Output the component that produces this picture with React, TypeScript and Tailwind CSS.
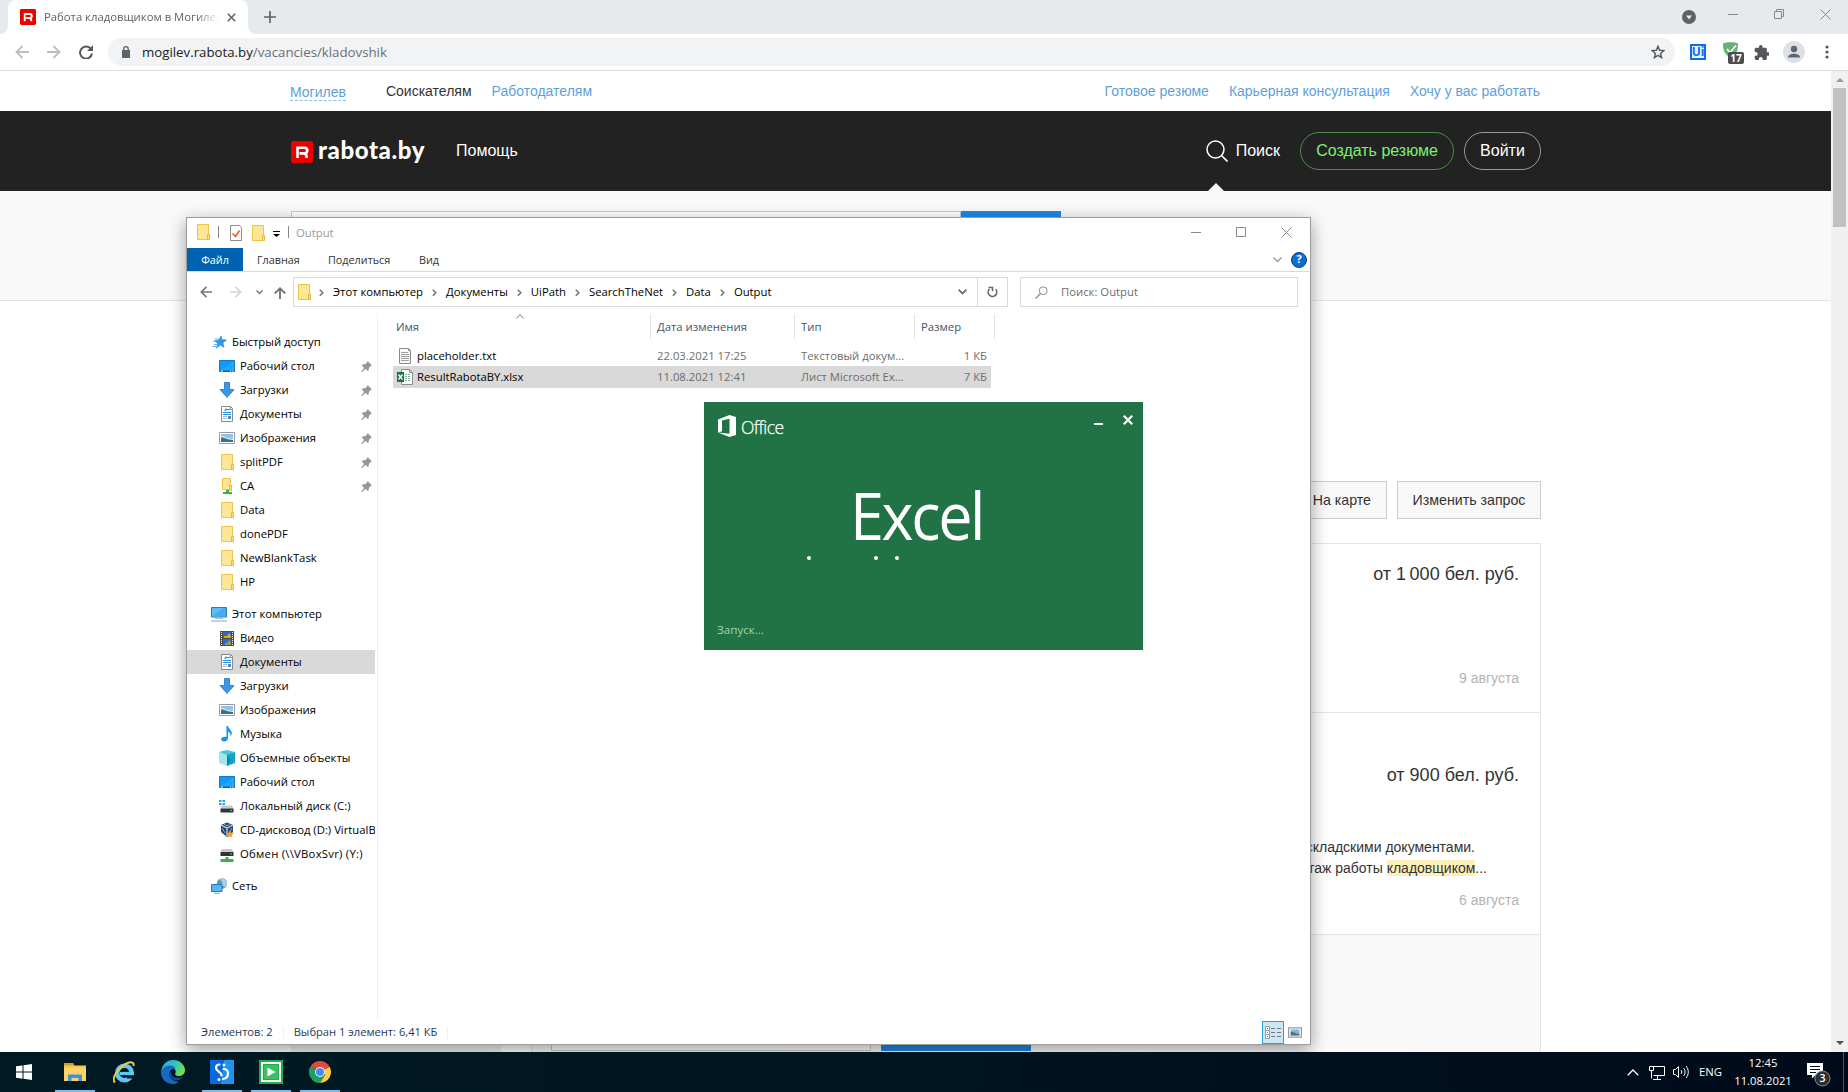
import React from "react";

const UI = "font-['Open_Sans','Noto_Sans',sans-serif]";
const ARIAL = "font-['Liberation_Sans',Arial,sans-serif]";

function Svg({ w = 16, h = 16, vb, className = "", children }: { w?: number; h?: number; vb?: string; className?: string; children: React.ReactNode }) {
  return (
    <svg width={w} height={h} viewBox={vb ?? `0 0 ${w} ${h}`} className={`block shrink-0 ${className}`} fill="none">
      {children}
    </svg>
  );
}

/* ---------- small icons ---------- */

const Folder = () => (
  <Svg>
    <path d="M2.500.500h11v15h-11z" fill="#ffe694" stroke="#ecc447" />
    <path d="M12.500 10.500h2v5h-2z" fill="#fbe08a" stroke="#e6b93a" />
  </Svg>
);
const NetFolder = () => (
  <Svg>
    <path d="M3.500.500h8v11h-8z" fill="#ffe694" stroke="#ecc447" />
    <path d="M10.500 7.500h2v5h-2z" fill="#fbe08a" stroke="#e6b93a" />
    <path d="M7 12h3v2h-3zM4 14h9v2h-9z" fill="#37b24a" />
  </Svg>
);
const QuickStar = () => (
  <Svg>
    <path d="m10 2 1 3.700 4.500.2-3.600 2.800 1.100 4.600-3.700-2.200L5.500 14l1.300-4.600L3.600 6.700l4.300-.4z" fill="#2f9be8" stroke="#1d7fc9" strokeWidth=".6" />
    <path d="M4 5h4M2.500 7.500h3M3 10.500h3M1.500 12.500h4" stroke="#55b2f0" />
  </Svg>
);
const Desktop = () => (
  <Svg>
    <path d="M.5 2.500h15v11H.5z" fill="#0d9bff" stroke="#1279c2" />
    <path d="M1 13 15 3v10z" fill="#1fa8ff" />
    <path d="M1 13h14" stroke="#0a5c9e" />
    <path d="M2 13h2M11 13h1M13 13h1" stroke="#fff" />
  </Svg>
);
const Download = () => (
  <Svg>
    <path d="M5.500.500h5v7h4.500L8 15.500 1 7.500h4.500z" fill="#3a96e6" stroke="#2274bf" strokeWidth=".8" />
  </Svg>
);
const Doc = () => (
  <Svg>
    <path d="M2.500.500h9l2 2v13h-11z" fill="#fff" stroke="#8a8a8a" />
    <path d="M11.500.500v3h2" stroke="#8a8a8a" />
    <path d="M5.500 5 7 2.500V5M8 3.500h3M4 6.500h8M4 8.500h8" stroke="#2a8dd8" />
    <path d="M4 10.500h4M4 12.500h4" stroke="#9bb8cf" />
    <path d="M9 10h3v3H9z" fill="#4a8bb5" />
  </Svg>
);
const Picture = () => (
  <Svg>
    <path d="M.5 2.500h15v11H.5z" fill="#fff" stroke="#9a9a9a" />
    <path d="M2 4h12v8H2z" fill="#8cc4ee" />
    <path d="M2 6c4 0 5 2.500 12 2.500V10H2z" fill="#cfe6f2" />
    <path d="M2 7.500c4 0 5 2 12 2.500v2H2z" fill="#3f6f7a" />
  </Svg>
);
const Computer = () => (
  <Svg>
    <path d="M.5 1.500h15v9.500H.5z" fill="#5ebdf8" stroke="#3579ab" />
    <path d="M1 10.500 13 2h2v8.500z" fill="#3fadf5" />
    <path d="M4 12.500h8" stroke="#a9b8c4" />
    <path d="M0 15h16" stroke="#93a5b3" />
  </Svg>
);
const Video = () => (
  <Svg>
    <path d="M1 1h14v15H1z" fill="#4c4c4c" />
    <path d="M4 2h8v6H4zM4 9h8v6H4z" fill="#3467c4" />
    <path d="M5 6h3l2-3 2 3v2H5z" fill="#d6a928" />
    <path d="M6 13h2l2-3 2 2v3H6z" fill="#8ba33a" />
    <path d="M2.500 2v14M13.500 2v14" stroke="#eee" strokeDasharray="1 1" />
  </Svg>
);
const Music = () => (
  <Svg>
    <path d="M7.500 0h1.500c.5 3 4 4 3.800 7.500-.1 1.300-.8 2.500-1.500 3 .8-2.500-.3-4-2.300-4.700V12c0 2.300-1.800 3.500-4 3.500-1.700 0-2.800-.9-2.800-2.200 0-1.600 1.700-2.600 3.500-2.600.7 0 1.300.1 1.800.4z" fill="#0d97f2" />
  </Svg>
);
const Cube = () => (
  <Svg>
    <path d="M0 2 8 4v12l-8-3z" fill="#a5e6ea" />
    <path d="M16 2 8 4v12l8-3z" fill="#14a6c9" />
    <path d="M0 2 8 0l8 2-8 3z" fill="#48c6d6" />
    <path d="m8 5 4 5-4 6z" fill="#0f87ab" />
  </Svg>
);
const DriveBody = ({ y }: { y: number }) => (
  <g transform={`translate(0 ${y})`}>
    <path d="M3 0h10l1.500 3h-13z" fill="#c9c9c9" />
    <path d="M1.500 3h13v4h-13z" fill="#333" />
    <path d="M11 4.500h2v1h-2z" fill="#3be04c" />
  </g>
);
const DiskC = () => (
  <Svg>
    <path d="M0 2h2.500v2H0zM3.500 2H6v2H3.500zM0 5h2.500v2H0zM3.500 5H6v2H3.500z" fill="#17a9ee" />
    <DriveBody y={7.500} />
  </Svg>
);
const DiskCD = () => (
  <Svg>
    <path d="M8 .5 14 3v7l-6 5-6-5V3z" fill="#25486e" />
    <path d="M2 3 8 6l6-3M8 6v8" stroke="#c5d3e2" strokeWidth="1.300" />
    <path d="m3 6 3 5M13 6l-3 5M5 2l3 2 3-2" stroke="#8fa9c4" />
    <path d="m11 8.500 1.200 2.300 2.600.3-1.900 1.800.5 2.600L11 14.300 8.700 15.500l.4-2.600-1.900-1.800 2.600-.3z" fill="#f4a21f" />
  </Svg>
);
const DiskNet = () => (
  <Svg>
    <DriveBody y={3} />
    <path d="M6.500 11h3v2h5v3h-13v-3h5z" fill="#3fae49" />
  </Svg>
);
const Network = () => (
  <Svg>
    <circle cx="11" cy="5.500" r="5.200" fill="#5c9dbd" />
    <path d="M8 2c3 0 4 2 3 4s3 2 3 4c2-2 3-5 1-7-2-3-6-2-7-1z" fill="#a9d2e0" />
    <path d="M.5 6.500h10.500v7H.5z" fill="#51b7f6" stroke="#2c78ab" />
    <path d="M3 15.300h6" stroke="#8ba0af" />
  </Svg>
);
const Pin = () => (
  <Svg w={11} h={11} className="absolute left-[174px] top-[7px]">
    <path d="M6.500 0 11 4.500l-1.200.4-2 2 .2 2-1.200 1.100L4.500 7.700 1 11 0 10.700 3 7 .9 4.500 2 3.200l2.200.1 2-2z" fill="#8d98a2" />
  </Svg>
);
const Chevron = ({ first }: { first?: boolean }) => (
  <Svg w={5} h={8} className={first ? "ml-[7px] mr-[9px] mt-px" : "mx-[9px] mt-px"}>
    <path d="m.8.8 3 3-3 3" stroke="#777" strokeWidth="1.600" />
  </Svg>
);
const TxtFile = () => (
  <Svg>
    <path d="M2.500.500h9l2 2v13h-11z" fill="#fafafa" stroke="#8c8c8c" />
    <path d="M11.500.500v2h2" stroke="#8c8c8c" />
    <path d="M4 4.500h7M4 6.500h8M4 8.500h8M4 10.500h8M4 12.500h8" stroke="#a0a0a0" />
  </Svg>
);
const XlsFile = () => (
  <Svg>
    <path d="M4.500.500h8l3 3v12h-11z" fill="#fff" stroke="#8c8c8c" />
    <path d="M12.500.500v3h3" stroke="#8c8c8c" />
    <path d="M8 5.500h6M8 7.500h6M8 9.500h6M8 11.500h6" stroke="#6fb38c" strokeDasharray="2 1" />
    <path d="M0 3h7v10H0z" fill="#1d7144" />
    <path d="m1.500 5.500 4 5M5.500 5.500l-4 5" stroke="#fff" strokeWidth="1.400" />
  </Svg>
);

/* ---------- browser ---------- */

function RLogo({ size }: { size: number }) {
  return (
    <Svg w={size} h={size} vb="0 0 22 22">
      <rect width="22" height="22" rx="2" fill="#ee0000" />
      <path d="M6.500 17V6.800h7a2.800 2.800 0 0 1 0 5.600H8.500M12.500 12.400c2.500.3 3 1.300 3 2.600v2" stroke="#fff" strokeWidth="2.600" />
    </Svg>
  );
}

function TabStrip() {
  return (
    <div className={`flex h-[34px] bg-[#e6eaed] ${UI}`}>
      <div className="flex w-2 bg-white"><div className="w-2 rounded-br-lg bg-[#e6eaed]" /></div>
      <div className="flex w-[240px] items-center rounded-t-lg bg-white pl-3">
        <RLogo size={16} />
        <div className="ml-2 w-[178px] overflow-hidden whitespace-nowrap text-[11.300px] text-[#5f6368] [mask-image:linear-gradient(to_right,black_86%,transparent_98%)]">
          Работа кладовщиком в Могилеве
        </div>
        <Svg w={9} h={9} className="ml-[5px]"><path d="m.8.8 7.400 7.400M8.200.8.8 8.200" stroke="#5f6368" strokeWidth="1.600" /></Svg>
      </div>
      <div className="w-2 bg-white"><div className="h-full rounded-bl-lg bg-[#e6eaed]" /></div>
      <Svg w={12} h={12} className="ml-2 mt-[11px]"><path d="M6 0v12M0 6h12" stroke="#5f6368" strokeWidth="1.700" /></Svg>
      <div className="ml-auto flex pr-[17px]">
        <Svg w={14} h={14} className="mt-[10px]"><circle cx="7" cy="7" r="7" fill="#5f6368" /><path d="M4 5.500h6l-3 4z" fill="#e6eaed" /></Svg>
        <Svg w={10} h={10} className="ml-8 mt-[9px]"><path d="M0 5.500h10" stroke="#888" /></Svg>
        <Svg w={10} h={10} className="ml-9 mt-[9px]"><path d="M.5 2.500h7v7h-7zM2.500 2V.5h7v7H8" stroke="#888" /></Svg>
        <Svg w={11} h={11} className="ml-9 mt-[9px]"><path d="m.5.5 10 10M10.500.500l-10 10" stroke="#888" /></Svg>
      </div>
    </div>
  );
}

function Toolbar() {
  return (
    <div className={`flex h-[37px] items-center border-b border-[#dadcde] bg-white pl-[15px] ${UI}`}>
      <Svg w={14} h={14}><path d="M14 7H1.500M7.500 1l-6 6 6 6" stroke="#bcbec1" strokeWidth="1.800" /></Svg>
      <Svg w={14} h={14} className="ml-[18px]"><path d="M0 7h12.500M6.500 1l6 6-6 6" stroke="#bcbec1" strokeWidth="1.800" /></Svg>
      <Svg w={14} h={14} className="ml-[18px]"><path d="M12 4.200A6 6 0 1 0 13 8.500" stroke="#54585d" strokeWidth="2" /><path d="M14 0v6H8z" fill="#54585d" /></Svg>
      <div className="ml-[15px] flex h-7 w-[1567px] items-center rounded-full bg-[#f1f3f4] pl-[14px] pr-[10px] text-[13.250px] text-[#6b6f74]">
        <Svg w={8} h={12} className="-mt-px"><path d="M0 4h8v8H0z" fill="#5f6368" /><path d="M1.800 5V2.900a2.200 2.200 0 0 1 4.400 0V5" stroke="#5f6368" strokeWidth="1.300" /></Svg>
        <div className="ml-3 mt-px"><span className="text-[#202124]">mogilev.rabota.by</span>/vacancies/kladovshik</div>
        <Svg w={14} h={14} className="ml-auto"><path d="m7 1.300 1.600 4 4.300.3-3.300 2.800 1 4.200L7 10.300l-3.600 2.300 1-4.200L1.100 5.600l4.300-.3z" stroke="#54585d" strokeWidth="1.400" /></Svg>
      </div>
      <div className="ml-[15px] flex h-4 w-4 items-center justify-center border-2 border-[#0a6fe8] bg-[#e9f3ff] text-[12px] font-bold leading-none text-[#0a6fe8]">Ui</div>
      <Svg w={22} h={22} className="ml-[17px] mt-[2px]">
        <path d="M0 1.500C3-.2 12-.2 15 1.500c0 6-1 11-7.500 14C1 12.500 0 7.500 0 1.500z" fill="#67b279" />
        <path d="m4 7 3 3.500 6-7" stroke="#fff" strokeWidth="1.500" />
        <rect x="5" y="10" width="16" height="12" rx="2" fill="#4d4d4d" />
        <text x="13" y="19.500" textAnchor="middle" fontSize="10" fontWeight="700" fill="#fff" className="font-['Open_Sans']">17</text>
      </Svg>
      <Svg w={15} h={15} vb="1 1 21 21" className="ml-[9px]"><path d="M20.500 11H19V7a2 2 0 0 0-2-2h-4V3.500a2.500 2.500 0 0 0-5 0V5H4a2 2 0 0 0-2 2v3.800h1.500a2.700 2.700 0 0 1 0 5.400H2V20a2 2 0 0 0 2 2h3.800v-1.500a2.700 2.700 0 0 1 5.400 0V22H17a2 2 0 0 0 2-2v-4h1.500a2.500 2.500 0 0 0 0-5z" fill="#54585d" /></Svg>
      <Svg w={22} h={22} className="ml-[14px]"><circle cx="11" cy="11" r="11" fill="#dde1e6" /><circle cx="11" cy="8" r="3.200" fill="#5c6672" /><path d="M5 16.500c0-5 12-5 12 0z" fill="#5c6672" /></Svg>
      <Svg w={4} h={14} className="ml-[20px]"><circle cx="2" cy="2" r="1.600" fill="#54585d" /><circle cx="2" cy="7" r="1.600" fill="#54585d" /><circle cx="2" cy="12" r="1.600" fill="#54585d" /></Svg>
    </div>
  );
}

function Site() {
  return (
    <div className={`flex w-[1831px] flex-col overflow-hidden bg-white ${ARIAL}`}>
      <div className="flex h-10 shrink-0 items-center pl-[290px] pr-[291px] pt-px text-[14px] text-[#5d9fdc]">
        <span className="mt-px border-b border-dashed border-[#8fbde8] leading-[16px]">Могилев</span>
        <span className="ml-10 text-[#333]">Соискателям</span>
        <span className="ml-5">Работодателям</span>
        <span className="ml-auto">Готовое резюме</span>
        <span className="ml-5">Карьерная консультация</span>
        <span className="ml-5">Хочу у вас работать</span>
      </div>
      <div className="relative flex h-20 shrink-0 items-center bg-[#222] pl-[291px] pr-[290px] text-[16px] text-white">
        <div className="mt-[2px]"><RLogo size={22} /></div>
        <span className="-mt-[2px] ml-[5px] w-[108px] font-['Lato'] text-[24px] font-black leading-none tracking-[0.600px]">rabota.by</span>
        <span className="ml-[30px]">Помощь</span>
        <Svg w={22} h={22} className="ml-auto"><circle cx="9.500" cy="9.500" r="8.500" stroke="#fff" strokeWidth="1.500" /><path d="m15.500 15.500 6 6" stroke="#fff" strokeWidth="1.700" /></Svg>
        <span className="ml-2">Поиск</span>
        <span className="ml-5 flex h-[38px] w-[154px] items-center justify-center rounded-full border border-[#4b8d46] text-[#7df073]">Создать резюме</span>
        <span className="ml-[10px] flex h-[38px] w-[77px] items-center justify-center rounded-full border border-[#999]">Войти</span>
        <Svg w={16} h={8} className="absolute bottom-0 left-[1208px]"><path d="m8 0 8 8H0z" fill="#f9f9f9" /></Svg>
      </div>
      <div className="flex h-[110px] shrink-0 border-b border-[#e4e4e4] bg-[#f9f9f9] pl-[291px] pt-5">
        <div className="h-[38px] w-[670px] border border-[#ccc] bg-white" />
        <div className="h-[38px] w-[100px] bg-[#1e88e5]" />
      </div>
      <div className="flex w-[1541px] grow pl-[291px]">
        <div className="mr-[30px] mt-[634px] w-[210px] shrink-0 bg-[#f0f0f0]" />
        <div className="flex w-[1010px] flex-col pt-[180px] text-[14px] text-[#333]">
          <div className="flex h-[38px] shrink-0 justify-end gap-[10px]">
            <div className="flex w-[115px] items-center justify-end border border-[#ccc] bg-[#f9f9f9] pr-[15px] pt-px text-[14.200px]">На карте</div>
            <div className="flex w-[144px] items-center justify-center border border-[#ccc] bg-[#f9f9f9] pt-px text-[14.200px]">Изменить запрос</div>
          </div>
          <div className="mt-6 h-[170px] shrink-0 border border-[#e4e4e4] pr-[21px] pt-[19px] text-right">
            <div className="text-[18px] leading-[22px]">от 1<span className="tracking-[-1.500px]">&nbsp;</span>000 бел. руб.</div>
            <div className="mt-[83px] leading-[20px] text-[#b3b3b3]">9 августа</div>
          </div>
          <div className="-mt-px h-[223px] shrink-0 border border-[#e4e4e4] pt-[51px] text-right">
            <div className="pr-[21px] text-[18px] leading-[22px]">от 900 бел. руб.</div>
            <div className="mt-[51px] pr-[65px] leading-[21px]">Работа со складскими документами.</div>
            <div className="pr-[53px] leading-[21px]">Стаж работы <span className="bg-[#fcefb8]">кладовщиком</span>...</div>
            <div className="mt-[11px] pr-[21px] leading-[20px] text-[#b3b3b3]">6 августа</div>
          </div>
          <div className="flex grow gap-[10px] border-x border-[#e4e4e4] bg-[#f9f9f9] pl-[19px] pt-[78px]">
            <div className="h-[38px] w-[320px] border border-[#ccc] bg-white" />
            <div className="h-[38px] w-[150px] bg-[#1e88e5]" />
          </div>
        </div>
      </div>
    </div>
  );
}

function Scrollbar() {
  return (
    <div className="flex w-[17px] flex-col items-center bg-[#f0f0f0]">
      <Svg w={8} h={4} className="mt-[7px]"><path d="m4 0 4 4H0z" fill="#999" /></Svg>
      <div className="mt-[6px] h-[139px] w-[13px] bg-[#c1c1c1]" />
      <Svg w={8} h={4} className="mb-[7px] mt-auto"><path d="m4 4 4-4H0z" fill="#505050" /></Svg>
    </div>
  );
}

/* ---------- file explorer ---------- */

type Item = { icon: React.ComponentType; label: string; pinned?: boolean; active?: boolean; wide?: boolean };

const quick: Item[] = [
  { icon: Desktop, label: "Рабочий стол", pinned: true },
  { icon: Download, label: "Загрузки", pinned: true },
  { icon: Doc, label: "Документы", pinned: true },
  { icon: Picture, label: "Изображения", pinned: true },
  { icon: Folder, label: "splitPDF", pinned: true },
  { icon: NetFolder, label: "CA", pinned: true },
  { icon: Folder, label: "Data" },
  { icon: Folder, label: "donePDF" },
  { icon: Folder, label: "NewBlankTask" },
  { icon: Folder, label: "HP" },
];
const pc: Item[] = [
  { icon: Video, label: "Видео" },
  { icon: Doc, label: "Документы", active: true },
  { icon: Download, label: "Загрузки" },
  { icon: Picture, label: "Изображения" },
  { icon: Music, label: "Музыка" },
  { icon: Cube, label: "Объемные объекты" },
  { icon: Desktop, label: "Рабочий стол" },
  { icon: DiskC, label: "Локальный диск (C:)" },
  { icon: DiskCD, label: "CD-дисковод (D:) VirtualB" },
  { icon: DiskNet, label: "Обмен (\\\\VBoxSvr) (Y:)", wide: true },
];

function TreeRow({ item, root }: { item: Item; root?: boolean }) {
  const Icon = item.icon;
  return (
    <div className={`relative flex h-6 w-[188px] items-center overflow-hidden whitespace-nowrap ${root ? "gap-[5px] pl-6" : "gap-[5px] pl-8"} ${item.active ? "bg-[#d9d9d9]" : ""}`}>
      <Icon />
      <span className={item.wide ? "tracking-[0.250px]" : ""}>{item.label}</span>
      {item.pinned && <Pin />}
    </div>
  );
}

function Explorer() {
  return (
    <div className={`absolute left-[186px] top-[217px] flex h-[828px] w-[1125px] flex-col border border-[#9d9d9d] bg-white text-[11.300px] text-black shadow-[0_5px_16px_rgba(0,0,0,0.38)] ${UI}`}>
      <div className="flex h-[30px] shrink-0 items-start pl-[8px] pt-[6px]">
        <Folder />
        <div className="ml-[7px] mt-[2px] h-3 w-px bg-[#888]" />
        <Svg className="ml-[9px] mt-px"><path d="M2.500.500h9l2 2v13h-11z" fill="#fff" stroke="#8c8c8c" /><path d="m4.500 8.500 3 3 4-6" stroke="#e8602c" strokeWidth="1.600" /></Svg>
        <div className="ml-[6px] mt-px"><Folder /></div>
        <Svg w={7} h={6} className="ml-[7px] mt-[7px]"><path d="M0 .5h7" stroke="#000" /><path d="M0 3h7L3.500 6z" fill="#000" /></Svg>
        <div className="ml-[8px] mt-[2px] h-3 w-px bg-[#888]" />
        <span className="ml-[7px] leading-[17px] text-[#999]">Output</span>
        <Svg w={10} h={10} className="ml-auto mt-[3px]"><path d="M0 5.500h10" stroke="#888" /></Svg>
        <Svg w={10} h={10} className="ml-[35px] mt-[3px]"><path d="M.5.500h9v9h-9z" stroke="#888" /></Svg>
        <Svg w={11} h={11} className="ml-[35px] mr-[18px] mt-[3px]"><path d="m.5.500 10 10M10.500.500l-10 10" stroke="#888" /></Svg>
      </div>
      <div className="flex h-6 shrink-0 items-center border-b border-[#dadbdc] text-[10.800px] text-[#333]">
        <div className="flex h-full w-14 items-center justify-center bg-[#0063b1] pt-[2px] text-white">Файл</div>
        <span className="ml-[14px] mt-[2px] w-[71px]">Главная</span>
        <span className="mt-[2px] w-[91px]">Поделиться</span>
        <span className="mt-[2px]">Вид</span>
        <Svg w={9} h={6} className="ml-auto"><path d="m.5.500 4 4 4-4" stroke="#999" strokeWidth="1.300" /></Svg>
        <div className="ml-[9px] mr-[3px] flex h-4 w-4 items-center justify-center rounded-full border border-[#0a3f78] bg-[#0b6fd0] text-[11px] font-bold text-white">?</div>
      </div>
      <div className="mt-[5px] flex h-[30px] shrink-0 items-center pl-[13px] pr-[12px]">
        <Svg w={12} h={12}><path d="M12 6H1.500M6.500.8 1.300 6l5.200 5.200" stroke="#777" strokeWidth="1.700" /></Svg>
        <Svg w={12} h={12} className="ml-[18px]"><path d="M0 6h10.500M5.500.8 10.700 6l-5.200 5.200" stroke="#d5d5d5" strokeWidth="1.700" /></Svg>
        <Svg w={7} h={5} className="ml-[14px]"><path d="m.5.500 3 3 3-3" stroke="#777" strokeWidth="1.500" /></Svg>
        <Svg w={12} h={12} className="ml-[11px] mt-[2px]"><path d="M6 12V1.500M.8 6.500 6 1.300l5.200 5.200" stroke="#777" strokeWidth="1.900" /></Svg>
        <div className="ml-[7px] flex h-[30px] w-[715px] items-center border border-[#d9d9d9] pl-[2px]">
          <Folder />
          <Chevron first />
          <span>Этот компьютер</span><Chevron /><span>Документы</span><Chevron /><span>UiPath</span><Chevron />
          <span>SearchTheNet</span><Chevron /><span>Data</span><Chevron /><span>Output</span>
          <Svg w={9} h={6} className="ml-auto mr-[10px]"><path d="m.7.700 3.800 3.800L8.300.7" stroke="#666" strokeWidth="1.700" /></Svg>
          <div className="flex h-full w-[30px] items-center justify-center border-l border-[#d9d9d9]">
            <Svg w={11} h={12}><path d="M2.500 3a4.300 4.300 0 1 0 6.200.3" stroke="#666" strokeWidth="1.600" /><path d="M1.500 1.500h4v3.800" stroke="#666" strokeWidth="1.500" /></Svg>
          </div>
        </div>
        <div className="ml-auto flex h-[30px] w-[278px] items-center border border-[#d9d9d9] pl-[14px] text-[#6d6d6d]">
          <Svg w={13} h={13}><circle cx="8.200" cy="4.700" r="3.900" stroke="#8d8494" /><path d="M5.500 7.500.5 12.500" stroke="#8d8494" strokeWidth="1.200" /></Svg>
          <span className="ml-[13px]">Поиск: Output</span>
        </div>
      </div>
      <div className="mt-[7px] flex grow">
        <div className="w-[191px] shrink-0 border-r border-[#f2f2f2] pt-4">
          <TreeRow root item={{ icon: QuickStar, label: "Быстрый доступ" }} />
          {quick.map((i) => <TreeRow key={i.label} item={i} />)}
          <div className="h-2" />
          <TreeRow root item={{ icon: Computer, label: "Этот компьютер" }} />
          {pc.map((i) => <TreeRow key={i.label} item={i} />)}
          <div className="h-2" />
          <TreeRow root item={{ icon: Network, label: "Сеть" }} />
        </div>
        <div className="relative pl-[15px]">
          <div className="grid h-[25px] w-[602px] grid-cols-[258px_144px_120px_80px] text-[#44546b]">
            <div className="flex items-center border-r border-[#e3e3e3] pl-[3px] pt-[2px]">Имя</div>
            <div className="flex items-center border-r border-[#e3e3e3] pl-[6px] pt-[2px]">Дата изменения</div>
            <div className="flex items-center border-r border-[#e3e3e3] pl-[6px] pt-[2px]">Тип</div>
            <div className="flex items-center border-r border-[#e3e3e3] pl-[6px] pt-[2px]">Размер</div>
          </div>
          <Svg w={8} h={5} className="absolute left-[138px] top-0"><path d="m.5 4.500 3.500-4 3.500 4" stroke="#777" /></Svg>
          <div className="mt-[6px] w-[597px]">
            <FileRow icon={<TxtFile />} name="placeholder.txt" date="22.03.2021 17:25" type="Текстовый докум..." size="1 КБ" />
            <FileRow icon={<XlsFile />} name="ResultRabotaBY.xlsx" date="11.08.2021 12:41" type="Лист Microsoft Ex..." size="7 КБ" active />
          </div>
        </div>
      </div>
      <div className="flex h-[23px] shrink-0 items-center pl-[14px] text-[11.150px] text-[#1e395b]">
        <span>Элементов: 2</span>
        <div className="ml-[10px] h-3 w-px bg-[#eee]" />
        <span className="ml-[10px]">Выбран 1 элемент: 6,41 КБ</span>
        <div className="ml-[10px] h-3 w-px bg-[#eee]" />
        <div className="ml-auto flex h-[23px] w-[22px] items-center justify-center border border-[#26a0da] bg-[#cbe8f6]">
          <Svg w={16} h={14}>
            <path d="M.5.500h4v4h-4zM.5 4.500h4v4h-4zM.5 8.500h4v4h-4z" fill="#fff" stroke="#999" />
            <path d="M6 2.500h4M12 2.500h4M6 6.500h4M12 6.500h4M6 10.500h4M12 10.500h4" stroke="#777" />
            <path d="M2 2h1v1H2z" fill="#555" /><path d="M2 6h1v1H2z" fill="#4a8fe8" /><path d="M2 10h1v1H2z" fill="#d22" />
          </Svg>
        </div>
        <div className="ml-1 mr-2"><Svg w={14} h={11} vb="0 2 16 12"><path d="M.7 2.700h14.600v10.600H.7z" fill="#fff" stroke="#999" strokeWidth="1.400" /><path d="M3 4.500h10v7H3z" fill="#7db4f2" /><path d="M3 7c4 0 5 2 10 2.500v2H3z" fill="#4a7a72" /></Svg></div>
      </div>
    </div>
  );
}

function FileRow(p: { icon: React.ReactNode; name: string; date: string; type: string; size: string; active?: boolean }) {
  return (
    <div className={`grid grid-cols-[264px_144px_120px_66px] items-center whitespace-nowrap text-[#6d6d6d] ${p.active ? "h-[22px] w-[598px] bg-[#d9d9d9]" : "h-[21px] pt-px"}`}>
      <div className="flex items-center gap-[4px] pl-[4px] text-black">{p.icon}<span>{p.name}</span></div>
      <div>{p.date}</div>
      <div>{p.type}</div>
      <div className="text-right">{p.size}</div>
    </div>
  );
}

/* ---------- splash ---------- */

function Splash() {
  return (
    <div className={`absolute left-[704px] top-[402px] flex h-[248px] w-[439px] flex-col bg-[#217346] text-white ${UI}`}>
      <div className="flex h-12 shrink-0 pl-[14px] pt-[13px]">
        <Svg w={18} h={22}><path d="m0 4.500 11.500-4.500L18 2v18l-6.500 2L0 17.500l11.500 1.300V3.800L4 5.600v10.600L0 17.700z" fill="#fff" /></Svg>
        <span className="ml-[5px] mt-px text-[17.500px] font-light leading-[22px] tracking-[-0.550px] [-webkit-text-stroke:0.250px_white]">Office</span>
        <Svg w={9} h={9} className="ml-auto mt-[2px]"><path d="M0 7h9" stroke="#fff" strokeWidth="2" /></Svg>
        <Svg w={10} h={10} className="ml-[20px] mr-[10px]"><path d="m.8.800 8.400 8.400M9.200.8.8 9.200" stroke="#fff" strokeWidth="2.200" /></Svg>
      </div>
      <div className="ml-[146px] mt-[21px] h-[85px] origin-left scale-x-[0.940] text-[65px] leading-[88px] tracking-[-2.500px]">Excel</div>
      <div className="flex pl-[103px]">
        <div className="h-1 w-1 rounded-full bg-white" />
        <div className="ml-[63px] h-1 w-1 rounded-full bg-white" />
        <div className="ml-[17px] h-1 w-1 rounded-full bg-white" />
      </div>
      <div className="mb-[11px] ml-[13px] mt-auto text-[11.600px] leading-[18px] text-[#9fd3b5]">Запуск...</div>
    </div>
  );
}

/* ---------- taskbar ---------- */

function Task({ children, open }: { children: React.ReactNode; open?: boolean }) {
  return (
    <div className={`flex h-10 w-10 items-center justify-center ${open ? "border-b-2 border-[#76b9ed] pt-[2px]" : ""}`}>{children}</div>
  );
}

function Taskbar() {
  return (
    <div className={`flex h-10 bg-linear-to-r from-[#001a24] via-[#001520] to-[#000a1a] text-white ${UI}`}>
      <div className="flex gap-[9px] pl-1">
        <div className="mr-[2px] flex w-10 items-center justify-center"><Svg><path d="M0 2.300 6.500 1.400v6.200H0zM7.500 1.200 16 0v7.600H7.500zM0 8.500h6.500v6.200L0 13.800zM7.500 8.500H16V16l-8.500-1.200z" fill="#fff" /></Svg></div>
        <Task open>
          <Svg w={22} h={19}><path d="M0 1h9l1.500 1.500H22V18H0z" fill="#f7c64d" /><path d="M0 0h9.500v2.500H0z" fill="#d99a1e" /><path d="M0 5h22v13H0z" fill="#fcd36b" /><path d="M4 11.500h14V18h-3.500v-3h-7v3H4z" fill="#3f95dc" /></Svg>
        </Task>
        <Task>
          <Svg w={22} h={22}><circle cx="11.500" cy="12" r="7.300" stroke="#5cc8f5" strokeWidth="4.500" /><path d="M7 12.500h13.500" stroke="#5cc8f5" strokeWidth="3.200" /><path d="M14 14.300h9v3.200h-9z" fill="#001a23" /><path d="M2 21.500C-2 18 4 9 10 4.500S21.500 0 20.500 5" stroke="#f5c63b" strokeWidth="2" /></Svg>
        </Task>
        <Task>
          <Svg w={24} h={24}>
            <defs><linearGradient id="eg" x1="0" y1="0" x2="1" y2=".4"><stop stopColor="#2ba3e0" /><stop offset=".6" stopColor="#34c3c0" /><stop offset="1" stopColor="#6fe04e" /></linearGradient></defs>
            <path d="M0 12C1 4 6 0 12 0c7 0 12 5 12 10 0 4-3 6-6.500 6-3 0-4-1.500-3-3 .8-1.500 0-5-4-5-5 0-9 1-10.500 4z" fill="url(#eg)" />
            <path d="M0 12c1-4 5-6.500 9-6.500 3 0 5 1.500 5.500 3.500-3-1-6 1-6 5 0 5 5 8 9.500 7.500C15.500 23.500 13.500 24 12 24 5 24 0 19 0 12z" fill="#1769c0" />
            <path d="M8.500 14c0 5 5 7 9 6 2-.5 4-2 4.800-3.200-1.500.8-3 1.200-5.300 1.200-3.500 0-7-2-7-6-.8.500-1.500 1-1.500 2z" fill="#0f4c9c" />
          </Svg>
        </Task>
        <Task open>
          <Svg w={24} h={24}><path d="M0 0h24v24H0z" fill="#0a68e0" /><path d="M14 0h10v24H11z" fill="#1f93f0" /><path d="M9.500 4.500C7.500 4.500 6 6 6 8c0 3.500 5.500 3.500 5.500 7.500M13.500 9c3 0 4.500 1.700 4.500 4.500s-1.500 5-5 5.500" stroke="#fff" strokeWidth="2.200" strokeLinecap="round" /><circle cx="14" cy="5" r="1.500" fill="#fff" /><circle cx="9" cy="19.500" r="1.500" fill="#fff" /></Svg>
        </Task>
        <Task open>
          <Svg w={24} h={24}><path d="M0 0h24v24H0z" fill="#1fae4b" /><path d="M3 3h18v18H3z" stroke="#fff" strokeWidth="2" /><path d="M5 5h14v14H5z" fill="#35c45f" /><path d="m8.500 7.500 8 4.500-8 4.500z" fill="#fff" /></Svg>
        </Task>
        <Task open>
          <Svg w={22} h={22}>
            <path d="M11 11 1.500 5.500A11 11 0 0 1 20.500 5.500z" fill="#dd4b3e" />
            <path d="M11 11 1.470 5.500A11 11 0 0 0 11 22l5-8z" fill="#1aa15f" />
            <path d="M11 6h9.800A11 11 0 0 1 11 22l5-8z" fill="#ffcd42" />
            <path d="M11 11V6h9.800z" fill="#dd4b3e" />
            <circle cx="11" cy="11" r="5" fill="#f4f4f4" /><circle cx="11" cy="11" r="4" fill="#4a8af4" />
          </Svg>
        </Task>
      </div>
      <div className="ml-auto flex items-center text-[11.300px]">
        <Svg w={12} h={7}><path d="m.7 6.300 5.300-5.300 5.300 5.300" stroke="#fff" strokeWidth="1.300" /></Svg>
        <Svg w={16} h={14} className="ml-[10px] mt-px"><path d="M4 .5h11.500v9H4.500M4 13.500h8M8.500 10v3M.5.500h4v4h-4zM2.500 5v7.500" stroke="#fff" /></Svg>
        <Svg w={16} h={14} className="ml-2"><path d="M.5 4.500h2l3-3v11l-3-3h-2z" stroke="#fff" /><path d="M8 5c1 1 1 3 0 4M10.500 3c2 2 2 6 0 8M13 1c3 3 3 9 0 12" stroke="#fff" /></Svg>
        <span className="ml-[10px] w-[24px]">ENG</span>
        <div className="ml-[8px] w-[64px] text-center leading-[18px]"><div>12:45</div><div>11.08.2021</div></div>
        <Svg w={24} h={24} className="ml-[12px] mt-[6px]">
          <path d="M0 0h16v12H8.500L5 15.500V12H0z" fill="#fff" /><path d="M3 3.500h10M3 6.500h10M3 9.500h6" stroke="#00101c" />
          <circle cx="15.500" cy="15.500" r="7.500" fill="#2b2f35" stroke="#8b8f94" />
          <text x="15.500" y="19.300" textAnchor="middle" fontSize="10.500" fontWeight="600" fill="#fff" className="font-['Open_Sans']">3</text>
        </Svg>
        <div className="ml-[12px] mr-1 h-10 w-px bg-[#4d5662]" />
      </div>
    </div>
  );
}

export default function App() {
  return (
    <div className="relative flex h-[1092px] w-[1848px] flex-col overflow-hidden bg-white">
      <TabStrip />
      <Toolbar />
      <div className="relative flex h-[981px] overflow-hidden">
        <Site />
        <Scrollbar />
      </div>
      <div className="absolute left-0 top-0 h-[1052px] w-[1831px] overflow-hidden">
        <Explorer />
        <Splash />
      </div>
      <Taskbar />
    </div>
  );
}
